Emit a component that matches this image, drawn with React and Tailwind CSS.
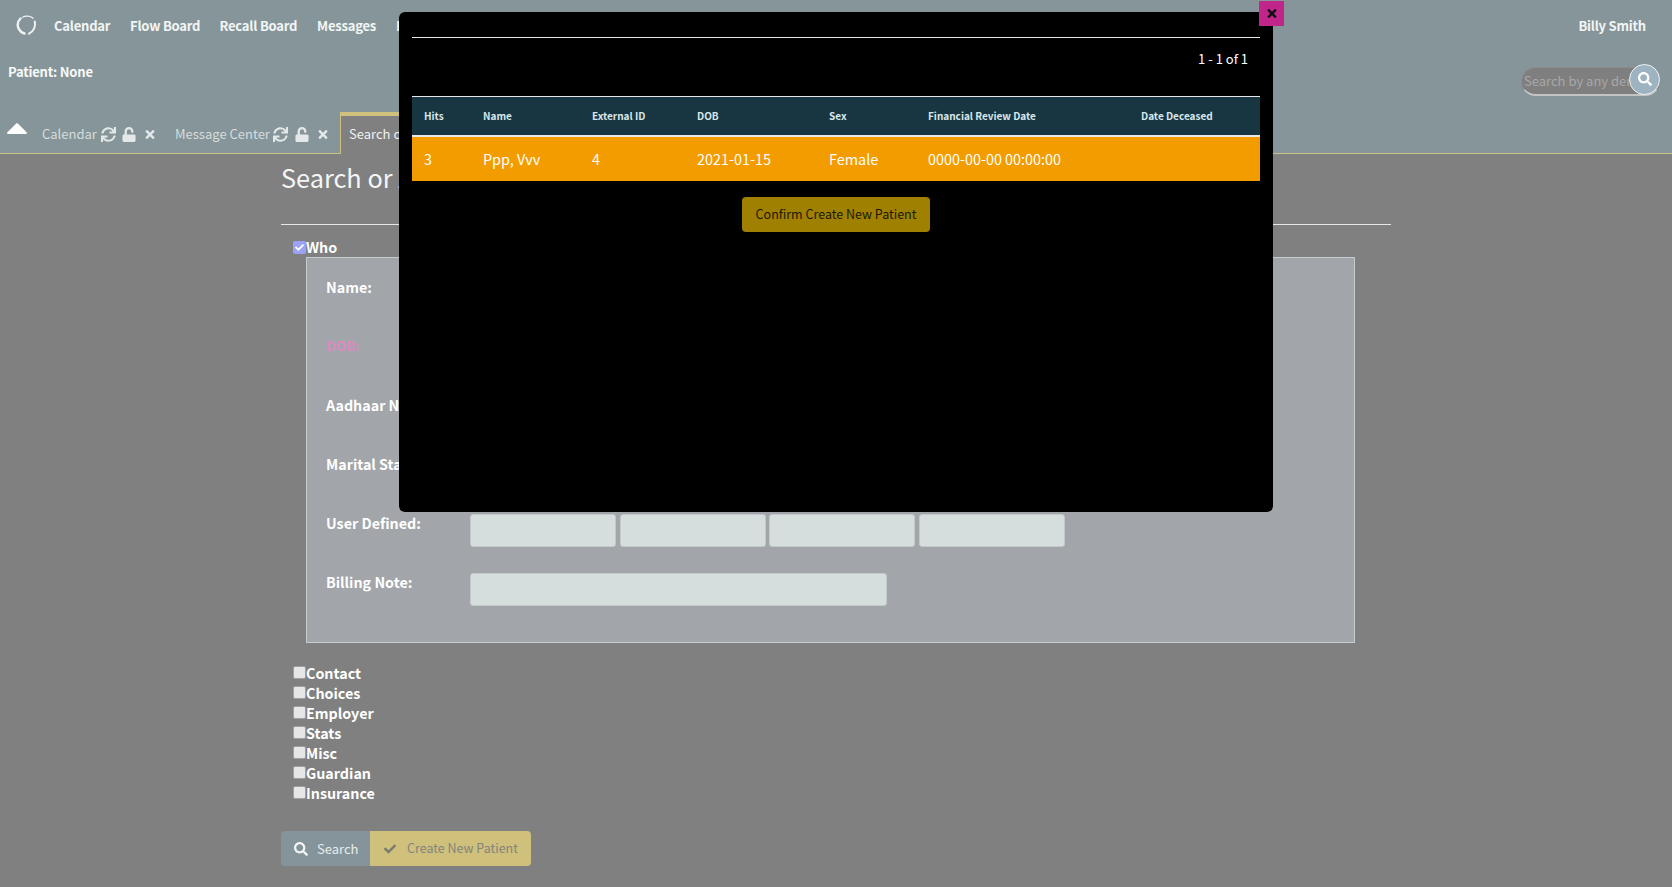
import React from 'react';
import { FaSync, FaUnlock, FaTimes, FaSearch, FaCheck } from 'react-icons/fa';

const font = { fontFamily: '"Noto Sans CJK SC", "Noto Sans", sans-serif' };

const nav = [
  ['Calendar', 'w-[76px]'],
  ['Flow Board', 'w-[89.5px]'],
  ['Recall Board', 'w-[97.5px]'],
  ['Messages', 'w-[79px]'],
  ['Patient', 'w-[80px]'],
];

const sections = ['Contact', 'Choices', 'Employer', 'Stats', 'Misc', 'Guardian', 'Insurance'];

const columns = [
  ['Hits', 'w-[71px]'],
  ['Name', 'w-[109px]'],
  ['External ID', 'w-[105px]'],
  ['DOB', 'w-[132px]'],
  ['Sex', 'w-[99px]'],
  ['Financial Review Date', 'w-[213px]'],
  ['Date Deceased', 'w-[119px]'],
];

const row = ['3', 'Ppp, Vvv', '4', '2021-01-15', 'Female', '0000-00-00 00:00:00', ''];

function Tab({ label, lockGap, textW }) {
  return (
    <div className="flex items-center text-[13px] leading-[20px] text-[#d5dddd] whitespace-nowrap">
      <span className={textW}>{label}</span>
      <FaSync className="w-[15px] h-[15px] text-[#e3e8e8]" />
      <FaUnlock className={`w-[14px] h-[15px] text-[#e3e8e8] ${lockGap}`} />
      <FaTimes className="w-[12px] h-[13px] ml-[8px] text-[#e3e8e8]" />
    </div>
  );
}

function Box({ checked }) {
  return (
    <span className={`w-[13px] h-[13px] rounded-[2px] flex items-center justify-center shrink-0 ${checked ? 'bg-[#9ca2f8]' : 'bg-[#e6e6e6] border border-[#a0a0a0]'}`}>
      {checked && <FaCheck className="w-[9px] h-[9px] text-white" />}
    </span>
  );
}

function Field({ label, className, children }) {
  return (
    <div className={`flex items-start ${className}`}>
      <div className="w-[144px] font-bold text-[14.3px] leading-[20px] text-white whitespace-nowrap">{label}</div>
      {children}
    </div>
  );
}

const inputCls = 'h-[33px] mt-px rounded-[3px] bg-[#d5dddd] border border-[#c3c9cb]';

export default function App() {
  return (
    <div className="relative h-[887px] w-[1672px] overflow-hidden bg-[#808080]" style={font}>
      <header className="h-[154px] bg-[#869599] border-b border-[#c9c08a] flex flex-col relative">
        <div className="flex items-center justify-between h-[51px] pl-[16px] pr-[26px]">
          <div className="flex items-center">
            <svg className="w-[21px] h-[23px] mr-[17px]" viewBox="0 0 21 23" fill="none" stroke="#eef2f2" strokeLinecap="round">
              <path d="M4.5 4.5C2 7 1.2 10.5 2.2 13.5c.9 2.6 3 5 6.3 6" strokeWidth="2.4" />
              <path d="M6.5 3.2C9.5 1.5 14.5 1.6 17 4.2" strokeWidth="1.3" />
              <path d="M18.8 7.5c1 4.4-.8 9.8-5.8 12.2" strokeWidth="2" />
            </svg>
            {nav.map(([n, w]) => (
              <span key={n} className={`${w} font-bold text-[13px] tracking-[-0.2px] leading-[20px] text-[#f2f5f5]`}>{n}</span>
            ))}
          </div>
          <span className="font-bold text-[13px] tracking-[-0.2px] leading-[20px] text-[#f2f5f5]">Billy Smith</span>
        </div>
        <div className="flex justify-between items-start pl-[8px] pr-[12px]">
          <span className="mt-[11px] font-bold text-[13px] tracking-[-0.2px] leading-[20px] text-[#f7f9f9]">Patient: None</span>
          <div className="relative mt-[16px] w-[139px] h-[29px] rounded-[15px] bg-[#7f7f7f] border border-[#8c8c8c] border-b-[#c4c4c4] border-b-2 pl-[2px] overflow-hidden text-[13px] leading-[25px] text-[#a8a8a8] whitespace-nowrap">
            Search by any demo
          </div>
          <div className="absolute right-[12px] top-[64px] w-[31px] h-[31px] rounded-full bg-[#9db3c1] border-[1.5px] border-[#eef2f2] flex items-center justify-center">
            <FaSearch className="w-[14px] h-[14px] text-white mb-[2px]" />
          </div>
        </div>
        <div className="absolute left-0 right-0 bottom-0 h-[42px] flex items-end">
          <svg className="w-[20px] h-[11px] ml-[7px] mb-[19px]" viewBox="0 0 20 11">
            <path d="M9.2 .5 .4 9.2c-.5.6-.2 1.8.7 1.8h17.8c.9 0 1.2-1.2.7-1.8L10.8.5c-.5-.4-1.1-.4-1.6 0z" fill="#fff" />
          </svg>
          <div className="ml-[15px] mb-[9px]"><Tab label="Calendar" textW="w-[59px]" lockGap="ml-[6px]" /></div>
          <div className="ml-[19px] mb-[9px]"><Tab label="Message Center" textW="w-[98px]" lockGap="ml-[7px]" /></div>
          <div className="ml-[11px] -mb-px w-[200px] h-[42px] bg-[#808080] border-t-[4px] border-l border-[#cfc07c] pl-[8px] pt-[8px] text-[13px] leading-[20px] text-[#eef2f2] whitespace-nowrap">
            Search or Add Patient
          </div>
        </div>
      </header>

      <main className="ml-[281px] w-[1110px]">
        <h2 className="mt-[4px] h-[48px] text-[25.3px] leading-[38px] text-[#f4f6f6]">Search or Add Patient</h2>
        <div className="mt-[18px] border-t border-[#e8e8e8]" />
        <div className="ml-[12px] mt-[15px] flex items-center h-[16px]">
          <span className="-mt-[2px]"><Box checked /></span>
          <span className="-mt-[2px] font-bold text-[14.3px] leading-[18px] text-white">Who</span>
        </div>
        <section className="ml-[25px] mt-[1px] w-[1049px] h-[386px] bg-[#a2a5a9] border border-[#c3cfcf] pl-[19px] pt-[19px]">
          <Field label="Name:" className="h-[58px]" />
          <Field label={<span className="text-[13.5px] text-[#dc8ac0]">DOB:</span>} className="h-[60px]" />
          <Field label="Aadhaar Number:" className="h-[59px]" />
          <Field label="Marital Status:" className="h-[59px]" />
          <Field label="User Defined:" className="h-[59px]">
            <div className="flex gap-[3.6px]">
              <div className={`w-[146px] ${inputCls}`} />
              <div className={`w-[146px] ${inputCls}`} />
              <div className={`w-[146px] ${inputCls}`} />
              <div className={`w-[146px] ${inputCls}`} />
            </div>
          </Field>
          <Field label="Billing Note:">
            <div className={`w-[417px] ${inputCls}`} />
          </Field>
        </section>
        <div className="ml-[12px] mt-[20px] flex flex-col">
          {sections.map((s) => (
            <div key={s} className="flex items-center h-[20px]">
              <span className="-mt-[2px]"><Box /></span>
              <span className="font-bold text-[14.3px] leading-[20px] text-white">{s}</span>
            </div>
          ))}
        </div>
        <div className="mt-[28px] flex h-[35px] text-[13px] whitespace-nowrap">
          <button className="w-[89px] rounded-l-[4px] bg-[#84949a] flex items-center pl-[13px] text-[#e8eded]">
            <FaSearch className="w-[14px] h-[14px] text-[#f2f5f5] mr-[9px]" />
            Search
          </button>
          <button className="w-[161px] rounded-r-[4px] bg-[#cfc07c] flex items-center pl-[13px] text-[12.5px] text-[#85847c]">
            <FaCheck className="w-[14px] h-[12px] text-[#7b7a70] mr-[10px]" />
            Create New Patient
          </button>
        </div>
      </main>

      {/* result dialog */}
      <div className="absolute left-[399px] top-[12px] w-[874px] h-[500px] bg-black rounded-[6px] px-[13px] pt-[25px]">
        <div className="border-t border-[#e8e8e8]" />
        <div className="h-[58px] pr-[12px] pt-[11px] flex items-start justify-end text-[13px] leading-[20px] text-white">1 - 1 of 1</div>
        <div className="flex items-center h-[38px] bg-[#173642] border-t border-[#e8e8e8] border-b-2 border-b-[#e8e8e8] box-content">
          {columns.map(([c, w], i) => (
            <div key={c} className={`${w} ${i === 0 ? 'pl-[12px]' : ''} font-bold text-[10px] leading-[16px] text-[#d9e6ea]`}>{c}</div>
          ))}
        </div>
        <div className="flex items-center h-[44px] bg-[#f39c00]">
          {row.map((v, i) => (
            <div key={i} className={`${columns[i][1]} ${i === 0 ? 'pl-[12px]' : ''} text-[14.4px] leading-[20px] text-white`}>{v}</div>
          ))}
        </div>
        <div className="flex justify-center mt-[16px]">
          <button className="w-[188px] h-[35px] rounded-[4px] bg-[#a08000] text-[12.5px] text-[#1c1800]">Confirm Create New Patient</button>
        </div>
      </div>
      <button className="absolute left-[1259px] top-[1px] w-[25px] h-[25px] bg-[#c0258a] flex items-center justify-center">
        <FaTimes className="w-[12px] h-[13px] text-[#111]" />
      </button>
    </div>
  );
}
